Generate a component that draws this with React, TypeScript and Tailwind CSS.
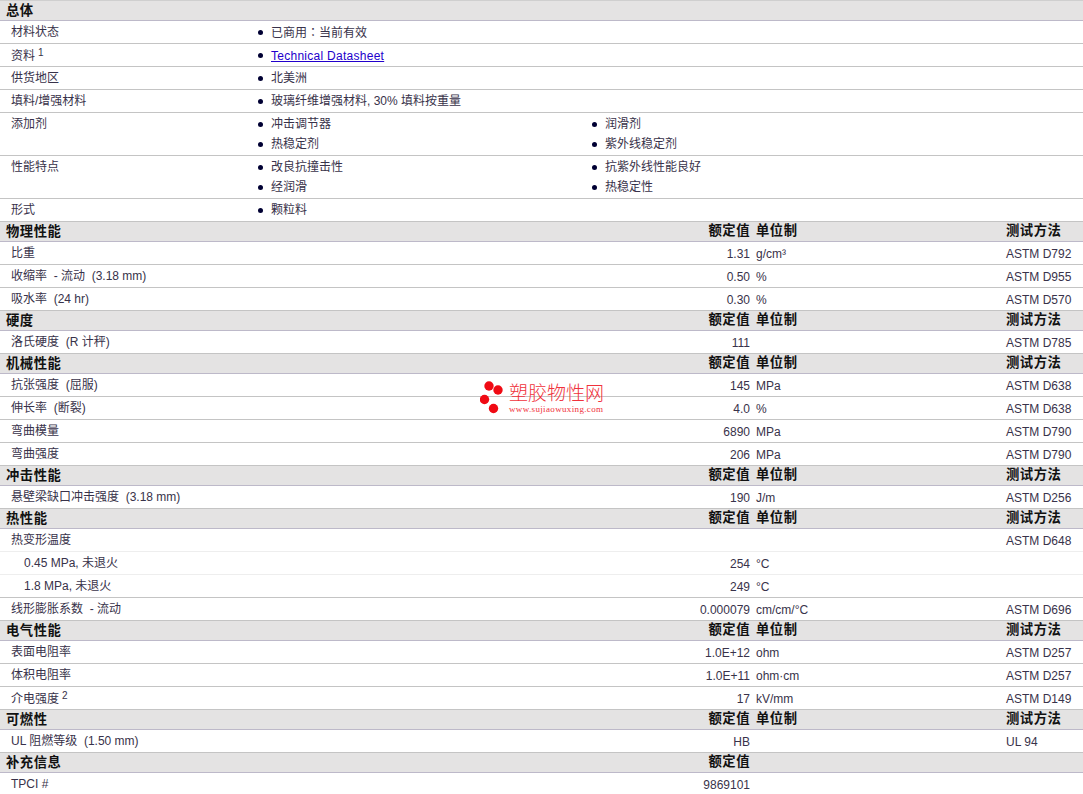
import React from "react";

type DataRow = {
  label: React.ReactNode;
  value?: string;
  unit?: string;
  method?: string;
  sub?: boolean;
  noLine?: boolean;
};

type Section = {
  title: string;
  noUnit?: boolean;
  rows: DataRow[];
};

const general: { label: React.ReactNode; items: React.ReactNode[] }[] = [
  {
    label: "材料状态",
    items: [
      <>
        已商用<span className="font-['Noto_Sans_CJK_TC',sans-serif]">：</span>当前有效
      </>,
    ],
  },
  {
    label: <Sup text="资料" n="1" />,
    items: [
      <a href="#" className="relative top-px tracking-[0.27px] text-[#2200cc] underline">
        Technical Datasheet
      </a>,
    ],
  },
  { label: "供货地区", items: ["北美洲"] },
  { label: "填料/增强材料", items: ["玻璃纤维增强材料, 30% 填料按重量"] },
  { label: "添加剂", items: ["冲击调节器", "润滑剂", "热稳定剂", "紫外线稳定剂"] },
  { label: "性能特点", items: ["改良抗撞击性", "抗紫外线性能良好", "经润滑", "热稳定性"] },
  { label: "形式", items: ["颗粒料"] },
];

const sections: Section[] = [
  {
    title: "物理性能",
    rows: [
      { label: "比重", value: "1.31", unit: "g/cm³", method: "ASTM D792" },
      { label: "收缩率  - 流动  (3.18 mm)", value: "0.50", unit: "%", method: "ASTM D955" },
      { label: "吸水率  (24 hr)", value: "0.30", unit: "%", method: "ASTM D570" },
    ],
  },
  {
    title: "硬度",
    rows: [{ label: "洛氏硬度  (R 计秤)", value: "111", method: "ASTM D785" }],
  },
  {
    title: "机械性能",
    rows: [
      { label: "抗张强度  (屈服)", value: "145", unit: "MPa", method: "ASTM D638" },
      { label: "伸长率  (断裂)", value: "4.0", unit: "%", method: "ASTM D638" },
      { label: "弯曲模量", value: "6890", unit: "MPa", method: "ASTM D790" },
      { label: "弯曲强度", value: "206", unit: "MPa", method: "ASTM D790" },
    ],
  },
  {
    title: "冲击性能",
    rows: [
      { label: "悬壁梁缺口冲击强度  (3.18 mm)", value: "190", unit: "J/m", method: "ASTM D256" },
    ],
  },
  {
    title: "热性能",
    rows: [
      { label: "热变形温度", method: "ASTM D648", noLine: true },
      { label: "0.45 MPa, 未退火", value: "254", unit: "°C", sub: true, noLine: true },
      { label: "1.8 MPa, 未退火", value: "249", unit: "°C", sub: true },
      { label: "线形膨胀系数  - 流动", value: "0.000079", unit: "cm/cm/°C", method: "ASTM D696" },
    ],
  },
  {
    title: "电气性能",
    rows: [
      { label: "表面电阻率", value: "1.0E+12", unit: "ohm", method: "ASTM D257" },
      { label: "体积电阻率", value: "1.0E+11", unit: "ohm·cm", method: "ASTM D257" },
      { label: <Sup text="介电强度" n="2" />, value: "17", unit: "kV/mm", method: "ASTM D149" },
    ],
  },
  {
    title: "可燃性",
    rows: [{ label: "UL 阻燃等级  (1.50 mm)", value: "HB", method: "UL 94" }],
  },
  {
    title: "补充信息",
    noUnit: true,
    rows: [{ label: "TPCI #", value: "9869101" }],
  },
];

function Sup({ text, n }: { text: string; n: string }) {
  return (
    <span className="relative top-px">
      {text}
      <span className="absolute left-full top-[-6px] ml-[3px] text-[10px]">{n}</span>
    </span>
  );
}

const HeaderBar = ({ title, cols, noUnit }: { title: string; cols?: boolean; noUnit?: boolean }) => (
  <div className="flex h-5 items-center border-b border-[#bdb9c9] bg-[#e4e3e3] pb-[2px] text-[13.33px] font-bold leading-none tracking-[0.5px] text-[#111]">
    <div className="relative top-px w-[690px] pl-[6px]">{title}</div>
    {cols && <div className="w-[60px] whitespace-nowrap text-right">额定值</div>}
    {cols && <div className="w-[250px] pl-[6px]">{noUnit ? "" : "单位制"}</div>}
    {cols && !noUnit && <div className="w-[83px] pl-[6px]">测试方法</div>}
  </div>
);

const Bullet = ({ children }: { children: React.ReactNode }) => (
  <div className="flex h-5 items-center">
    <span className="ml-[2px] mr-[8px] h-[5px] w-[5px] rounded-full bg-[#000033]" />
    <span className="whitespace-nowrap">{children}</span>
  </div>
);

const GeneralRow = ({ label, items }: { label: React.ReactNode; items: React.ReactNode[] }) => (
  <div className="flex border-b border-[#c4c4c4] py-px">
    <div className="h-5 w-[256px] pl-[11px] leading-5">{label}</div>
    <div className="grid flex-1 grid-cols-[334px_1fr]">
      {items.map((item, i) => (
        <Bullet key={i}>{item}</Bullet>
      ))}
    </div>
  </div>
);

const PropRow = ({ row }: { row: DataRow }) => (
  <div
    className={`flex h-[23px] border-b ${row.noLine ? "border-[#eeeeee]" : "border-[#c4c4c4]"}`}
  >
    <div className={`w-[690px] whitespace-pre pt-px leading-5 ${row.sub ? "pl-6" : "pl-[11px]"}`}>
      {row.label}
    </div>
    <div className="w-[60px] whitespace-nowrap pt-[2px] text-right leading-5">{row.value}</div>
    <div className="w-[250px] whitespace-nowrap pl-[6px] pt-[2px] leading-5">{row.unit}</div>
    <div className="flex-1 whitespace-nowrap pl-[6px] pt-[2px] leading-5">{row.method}</div>
  </div>
);

const Watermark = () => (
  <div className="absolute left-[480px] top-[378px] flex items-start gap-[2px]">
    <svg width="27" height="36" viewBox="0 0 27 36" className="mt-px">
      <circle cx="9" cy="6" r="4.7" fill="#f00a14" />
      <circle cx="18" cy="10" r="4.7" fill="#f00a14" />
      <circle cx="4.5" cy="19.5" r="4.7" fill="#f00a14" />
      <circle cx="13.5" cy="28.5" r="4.7" fill="#f00a14" />
    </svg>
    <div className="flex flex-col text-[#f0323c]">
      <span className="mt-[5px] whitespace-nowrap text-[19px] font-light leading-[20px]">塑胶物性网</span>
      <span className="whitespace-nowrap font-['Liberation_Serif',serif] text-[9px] font-normal leading-[10px] tracking-[0.35px]">
        www.sujiaowuxing.com
      </span>
    </div>
  </div>
);

export default function App() {
  return (
    <div className="relative h-[794px] w-[1083px] overflow-hidden border-t border-[#cfcfcf] bg-white font-['Liberation_Sans','Noto_Sans_CJK_SC',sans-serif] text-[12px] text-[#38324a]">
      <HeaderBar title="总体" />
      {general.map((g, i) => (
        <GeneralRow key={i} label={g.label} items={g.items} />
      ))}
      {sections.map((s) => (
        <div key={s.title}>
          <HeaderBar title={s.title} cols noUnit={s.noUnit} />
          {s.rows.map((r, i) => (
            <PropRow key={i} row={r} />
          ))}
        </div>
      ))}
      <Watermark />
    </div>
  );
}
